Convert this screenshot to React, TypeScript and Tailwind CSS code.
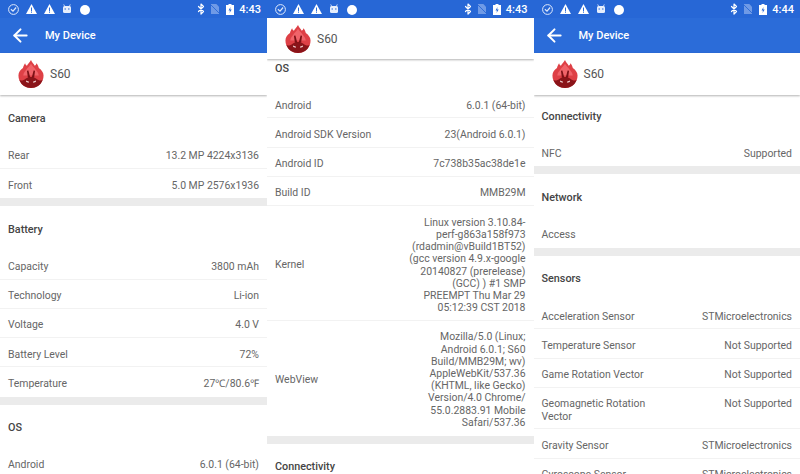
import React from 'react';
import { ArrowLeft, Bluetooth } from 'lucide-react';

type Row = { label: string; value?: string; lines?: string[]; top?: boolean };
type Section = { title: string; rows: Row[] };

const Logo: React.FC = () => (
  <svg viewBox="0 0 26 29" className="w-[26px] h-[28px] shrink-0">
    <path d="M13 0c.8 2.500 2.800 3.600 3.900 6 1-.6 1.600-1.500 1.800-2.700 1.400 1.800 2.100 3.400 2.400 5C24 10.400 26 13 26 16a13 13 0 0 1-26 0c0-3 1.900-5.700 4.700-7.700.4-1.600 1-3.100 2.200-4.900.3 1.100.8 2 1.900 2.500C9.800 3.700 11.800 2.500 13 0z" fill="#de4046" />
    <path d="M13 4c1.200 2.200 3.300 3.800 4.900 6 1.300 1.800 2.900 3 3.100 6H5c.2-3 1.800-4.200 3.100-6C9.700 7.800 11.800 6.200 13 4z" fill="#f0646a" />
    <path d="M1 21c3 .4 4.800-.2 6.400-1.700 1.700-1.200 3.600-1.700 5.600-1.700s3.900.5 5.600 1.700c1.600 1.500 3.400 2.100 6.400 1.700A13 13 0 0 1 13 29 13 13 0 0 1 1 21z" fill="#8a1419" />
    <path d="M9.800 18.500 8.800 11.200l1.500-.4 1.900 7.200zM16.200 18.500l1-7.300-1.500-.4-1.900 7.200z" fill="#7c1015" />
    <path d="M7.800 21.300l3.200 1.200-.5 1-2.400-.8zM18.200 21.300l-3.200 1.200.5 1 2.400-.8z" fill="#f5d9d9" />
  </svg>
);

const Warning: React.FC = () => (
  <svg viewBox="0 0 11 10" className="w-[11px] h-[10px]">
    <path d="M5.500 0 11 10H0z" fill="#fff" />
    <path d="M5 3.500h1v3.400H5zM5 7.600h1v1.100H5z" fill="#2a6bd8" />
  </svg>
);

const StatusBar: React.FC<{ time: string }> = ({ time }) => (
  <div className="h-[18px] bg-[#2767d6] flex items-center pl-[8px] pr-[6px] text-white shrink-0">
    <svg viewBox="0 0 11 11" className="w-[11px] h-[11px]">
      <circle cx="5.500" cy="5.500" r="4.900" fill="none" stroke="#dfe9fb" strokeWidth="1" />
      <path d="M2.900 5.300l2.100 1.900 3.100-3.700" fill="none" stroke="#dfe9fb" strokeWidth="1.200" />
    </svg>
    <div className="ml-[7px]"><Warning /></div>
    <div className="ml-[7px]"><Warning /></div>
    <svg viewBox="0 0 10 11" className="w-[10px] h-[11px] ml-[7px]">
      <path d="M1 3.500Q1 2 2.500 2h5Q9 2 9 3.500v4Q9 9 7.500 9h-5Q1 9 1 7.500z" fill="#e6eefc" />
      <path d="M2.500 2 1.700 .4M7.500 2 8.300 .4" stroke="#e6eefc" strokeWidth=".8" />
      <path d="M2.500 5h1.500M6 5h1.500" stroke="#2a6bd8" strokeWidth="1" />
    </svg>
    <div className="w-[10px] h-[10px] rounded-full bg-white ml-[8px] mt-[1px]" />
    <div className="flex-1" />
    <Bluetooth size={12} strokeWidth={2.4} className="text-white" />
    <svg viewBox="0 0 9 11" className="w-[8px] h-[10px] ml-[4px]">
      <path d="M0 0h6l3 3v8H0z" fill="#6f9ae6" />
      <path d="M0 1l9 9" stroke="#2767d6" strokeWidth="1" />
    </svg>
    <svg viewBox="0 0 8 11" className="w-[8px] h-[11px] ml-[7px]">
      <path d="M2.500 0h3v1H8v10H0V1h2.500z" fill="#fff" />
      <path d="M4.500 3 2.500 6.500h1.500L3.500 9l2.200-3.500H4.200z" fill="#2767d6" />
    </svg>
    <span className="ml-[5px] text-[11px] leading-none font-medium pt-[1px]">{time}</span>
  </div>
);

const Toolbar: React.FC = () => (
  <div className="h-[35px] bg-[#2b6cd9] flex items-center shrink-0">
    <ArrowLeft size={21} strokeWidth={2.3} className="text-white ml-[10px]" />
    <span className="ml-[14px] pt-[2px] text-white text-[11px] font-medium">My Device</span>
  </div>
);

const DeviceHeader: React.FC<{ h: string }> = ({ h }) => (
  <div className={`${h} bg-white flex items-center pl-[18px] relative z-10 shrink-0 shadow-[0_1px_2px_rgba(0,0,0,0.3)]`}>
    <Logo />
    <span className="ml-[6px] text-[12px] text-[#555555]">S60</span>
  </div>
);

const InfoRow: React.FC<{ row: Row; last: boolean }> = ({ row, last }) => (
  <div className={`flex justify-between px-[8px] pt-[10.500px] pb-[5.550px] border-b ${row.top ? 'items-start' : 'items-center'} ${last ? 'border-transparent' : 'border-[#f2f2f2]'}`}>
    <span className="text-[10.45px] leading-[12.2px] text-[#666666] max-w-[120px]">{row.label}</span>
    <span className="text-[10.45px] leading-[12.2px] text-[#666666] text-right">
      {row.lines ? row.lines.map((l) => <span key={l} className="block">{l}</span>) : row.value}
    </span>
  </div>
);

const SectionBlock: React.FC<{ s: Section }> = ({ s }) => (
  <div>
    <div className="h-[44.200px] pt-[3px] flex items-center px-[8px] text-[10.8px] font-medium text-[#444444]">{s.title}</div>
    {s.rows.map((r, i) => <InfoRow key={r.label} row={r} last={i === s.rows.length - 1} />)}
    <div className="h-[8px] bg-[#ebebeb]" />
  </div>
);

const camera: Section = { title: 'Camera', rows: [
  { label: 'Rear', value: '13.2 MP 4224x3136' },
  { label: 'Front', value: '5.0 MP 2576x1936' },
] };
const battery: Section = { title: 'Battery', rows: [
  { label: 'Capacity', value: '3800 mAh' },
  { label: 'Technology', value: 'Li-ion' },
  { label: 'Voltage', value: '4.0 V' },
  { label: 'Battery Level', value: '72%' },
  { label: 'Temperature', value: '27℃/80.6℉' },
] };
const os: Section = { title: 'OS', rows: [
  { label: 'Android', value: '6.0.1 (64-bit)' },
  { label: 'Android SDK Version', value: '23(Android 6.0.1)' },
  { label: 'Android ID', value: '7c738b35ac38de1e' },
  { label: 'Build ID', value: 'MMB29M' },
  { label: 'Kernel', lines: ['Linux version 3.10.84-', 'perf-g863a158f973', '(rdadmin@vBuild1BT52)', '(gcc version 4.9.x-google', '20140827 (prerelease)', '(GCC) ) #1 SMP', 'PREEMPT Thu Mar 29', '05:12:39 CST 2018'] },
  { label: 'WebView', lines: ['Mozilla/5.0 (Linux;', 'Android 6.0.1; S60', 'Build/MMB29M; wv)', 'AppleWebKit/537.36', '(KHTML, like Gecko)', 'Version/4.0 Chrome/', '55.0.2883.91 Mobile', 'Safari/537.36'] },
] };
const connectivity: Section = { title: 'Connectivity', rows: [{ label: 'NFC', value: 'Supported' }] };
const network: Section = { title: 'Network', rows: [{ label: 'Access' }] };
const sensors: Section = { title: 'Sensors', rows: [
  { label: 'Acceleration Sensor', value: 'STMicroelectronics' },
  { label: 'Temperature Sensor', value: 'Not Supported' },
  { label: 'Game Rotation Vector', value: 'Not Supported' },
  { label: 'Geomagnetic Rotation Vector', value: 'Not Supported', top: true },
  { label: 'Gravity Sensor', value: 'STMicroelectronics' },
  { label: 'Gyroscope Sensor', value: 'STMicroelectronics' },
] };

export default function App() {
  return (
    <div className="w-[800px] h-[474px] flex overflow-hidden bg-white font-['Roboto',sans-serif]">
      <div className="w-[267px] h-full flex flex-col overflow-hidden">
        <StatusBar time="4:43" />
        <Toolbar />
        <DeviceHeader h="h-[42px]" />
        <div className="mt-[0.600px]">
          <SectionBlock s={camera} />
          <SectionBlock s={battery} />
          <SectionBlock s={os} />
        </div>
      </div>
      <div className="w-[266.500px] h-full flex flex-col overflow-hidden">
        <StatusBar time="4:43" />
        <DeviceHeader h="h-[41px]" />
        <div className="-mt-[14px]">
          <SectionBlock s={os} />
          <SectionBlock s={connectivity} />
        </div>
      </div>
      <div className="w-[266.500px] h-full flex flex-col overflow-hidden">
        <StatusBar time="4:44" />
        <Toolbar />
        <DeviceHeader h="h-[42px]" />
        <div className="-mt-[2px]">
          <SectionBlock s={connectivity} />
          <SectionBlock s={network} />
          <SectionBlock s={sensors} />
        </div>
      </div>
    </div>
  );
}
